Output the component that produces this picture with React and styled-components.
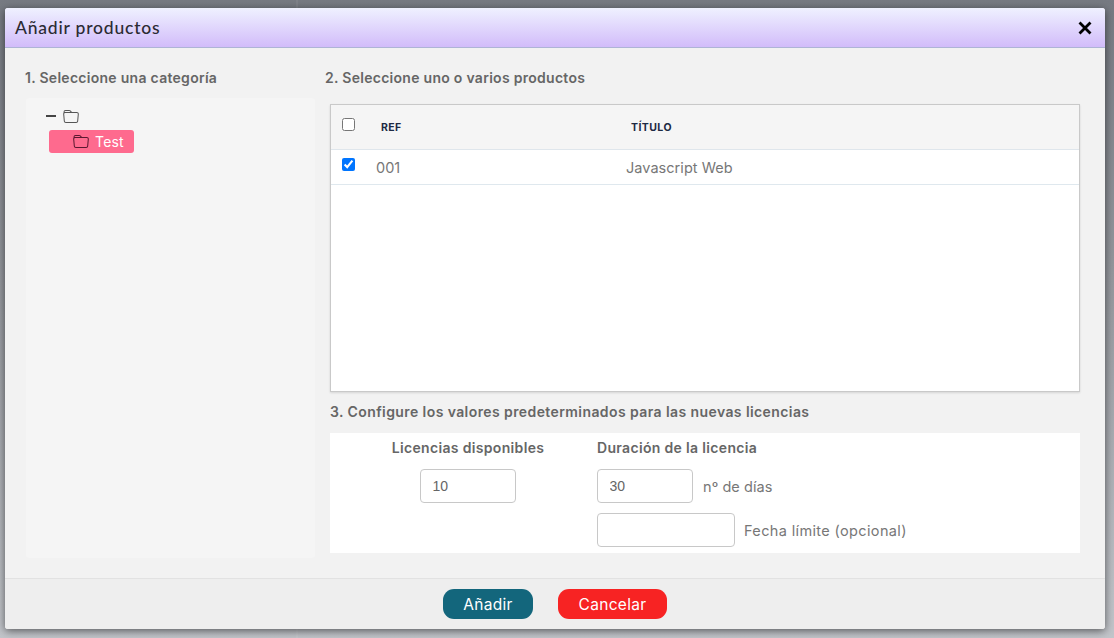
import React from "react";
import styled, { createGlobalStyle } from "styled-components";
import { BsFolder } from "react-icons/bs";

const Global = createGlobalStyle`
  html, body { margin: 0; padding: 0; height: 100%; }
  body { font-family: "Inter", "Liberation Sans", sans-serif; overflow: hidden; }
  #root { height: 100%; }
`;
const Backdrop = styled.div`
  box-sizing: border-box; width: 1114px; height: 638px; padding: 8px 9px 9px 5px;
  background:
    linear-gradient(90deg, transparent 296px, rgba(255,255,255,.06) 296px, rgba(255,255,255,.06) 298px, transparent 298px),
    linear-gradient(180deg, #767a82 0%, #92959b 40%, #c2c5ca 100%);
`;
const Dialog = styled.div`
  width: 1100px; height: 621px; display: flex; flex-direction: column;
  background: #f2f2f2; border-radius: 3px; overflow: hidden;
  box-shadow: 0 2px 9px rgba(0,0,0,.55);
`;
const Header = styled.header`
  box-sizing: border-box; height: 40px; flex: none; display: flex; align-items: center;
  justify-content: space-between; padding: 0 13px 0 10px;
  background: linear-gradient(180deg, #eff1ff 0%, #d2bcfa 100%);
  border-bottom: 1px solid #aeb4d6;
`;
const Title = styled.h1`
  margin: 0; font-weight: 500; color: #2b2b33; letter-spacing: .8px;
  font-family: "Lato", sans-serif; font-size: 17.5px;
`;
const Close = styled.button`
  border: 0; padding: 0; background: none; display: flex; color: #000; cursor: pointer;
`;
const Body = styled.div`
  flex: 1; display: grid; grid-template-columns: 300px 760px; column-gap: 0; padding: 0 20px;
`;
const Heading = styled.h2`
  margin: 0; font-size: 14px; font-weight: 600; color: #666; letter-spacing: ${p => p.$ls || ".28px"}; line-height: 20px;
`;
const Left = styled.section`
  display: flex; flex-direction: column; padding-top: 20px;
`;
const TreePanel = styled.div`
  margin: 10px 0 0 1px; width: 289px; height: 460px; box-sizing: border-box;
  background: #f5f5f5; border-radius: 3px; padding: 8px 0 0 20px; color: #555;
`;
const TreeRow = styled.div`
  display: flex; align-items: center; height: 22px;
`;
const Dash = styled.span`
  display: block; width: 10px; height: 2px; background: #444; margin-right: 7px; margin-top: -3px;
`;
const Selected = styled.div`
  display: flex; align-items: center; width: 85px; height: 23px; box-sizing: border-box; margin: 2px 0 0 3px;
  padding-left: 24px; gap: 6px; background: #fe6a8e; border-radius: 3px; color: #fff;
  font-size: 14px; font-weight: 400; letter-spacing: .2px; svg { color: #5b1830; }
`;
const Right = styled.section`
  display: flex; flex-direction: column; padding-top: 20px;
`;
const TableBox = styled.div`
  box-sizing: border-box; width: 750px; height: 288px; margin: 16px 0 0 5px; background: #fff;
  border: 1px solid #c9c9c9; box-shadow: 0 1px 2px rgba(0,0,0,.12);
`;
const HeadRow = styled.div`
  display: grid; grid-template-columns: 50px 250px 1fr; align-items: center; height: 45px; box-sizing: border-box;
  background: #f5f5f5; border-bottom: 1px solid #dfe6ec;
`;
const Row = styled.div`
  display: grid; grid-template-columns: 45px 250px 1fr; align-items: center; height: 35px; box-sizing: border-box;
  border-bottom: 1px solid #dfe8ee;
`;
const Check = styled.input`
  margin: -5px 0 0 11px; width: 13px; height: 13px; display: block;
`;
const Th = styled.span`
  font-size: 10.5px; font-weight: 700; color: #1d2a44; letter-spacing: .42px;
`;
const Td = styled.span`
  font-size: 14.5px; color: #777; letter-spacing: .04px;
`;
const ThirdHeading = styled(Heading)`
  margin: 10px 0 11px 5px;
`;
const Config = styled.div`
  display: grid; grid-template-columns: 246px 1fr; column-gap: 6px; box-sizing: border-box;
  width: 750px; height: 120px; margin-left: 5px; padding: 5px 0 0 15px; background: #fff;
`;
const Col = styled.div`
  display: flex; flex-direction: column; align-items: ${p => (p.$center ? "center" : "flex-start")};
`;
const FieldLabel = styled.div`
  font-size: 14px; font-weight: 600; color: #666; line-height: 20px; letter-spacing: .33px; margin-bottom: 11px;
`;
const FieldRow = styled.div`
  display: flex; align-items: center; margin-bottom: 10px;
`;
const Input = styled.input`
  box-sizing: border-box; width: ${p => p.$w}px; height: 34px; padding: 0 11.5px; border: 1px solid #c8c8c8;
  border-radius: 4px; background: #fff; font: 14px "Liberation Sans", sans-serif; color: #666; outline: 0;
`;
const Hint = styled.span`
  margin-left: ${p => p.$ml}px; font-size: 14.5px; color: #777; letter-spacing: ${p => p.$ls}px;
`;
const Footer = styled.footer`
  box-sizing: border-box; height: 51px; flex: none; display: flex; justify-content: center; align-items: center;
  gap: 25px; background: #eee; border-top: 1px solid #e2e2e2;
`;
const Button = styled.button`
  height: 30px; width: ${p => p.$w}px; border: 0; border-radius: 11px; background: ${p => p.$bg}; color: #fff;
  font: 400 15.5px "Inter", sans-serif; letter-spacing: .3px; padding: 0;
`;

export default function App() {
  return (
    <Backdrop>
      <Global />
      <Dialog>
        <Header>
          <Title>Añadir productos</Title>
          <Close aria-label="Cerrar">
            <svg width="14" height="14" viewBox="0 0 14 14">
              <path d="M2.5 2.5 11.5 11.5M11.5 2.5 2.5 11.5" stroke="currentColor" strokeWidth="2.8" strokeLinecap="square" />
            </svg>
          </Close>
        </Header>
        <Body>
          <Left>
            <Heading>1. Seleccione una categoría</Heading>
            <TreePanel>
              <TreeRow><Dash /><BsFolder size={16} /></TreeRow>
              <Selected><BsFolder size={16} />Test</Selected>
            </TreePanel>
          </Left>
          <Right>
            <Heading>2. Seleccione uno o varios productos</Heading>
            <TableBox>
              <HeadRow>
                <Check type="checkbox" readOnly />
                <Th>REF</Th>
                <Th>TÍTULO</Th>
              </HeadRow>
              <Row>
                <Check type="checkbox" defaultChecked />
                <Td>001</Td>
                <Td>Javascript Web</Td>
              </Row>
            </TableBox>
            <ThirdHeading $ls=".41px">3. Configure los valores predeterminados para las nuevas licencias</ThirdHeading>
            <Config>
              <Col $center>
                <FieldLabel>Licencias disponibles</FieldLabel>
                <Input $w={96} defaultValue="10" />
              </Col>
              <Col>
                <FieldLabel>Duración de la licencia</FieldLabel>
                <FieldRow><Input $w={96} defaultValue="30" /><Hint $ml={10} $ls={0.07}>nº de días</Hint></FieldRow>
                <FieldRow><Input $w={138} /><Hint $ml={9} $ls={0.36}>Fecha límite (opcional)</Hint></FieldRow>
              </Col>
            </Config>
          </Right>
        </Body>
        <Footer>
          <Button $w={90} $bg="#13667c">Añadir</Button>
          <Button $w={109} $bg="#f72323">Cancelar</Button>
        </Footer>
      </Dialog>
    </Backdrop>
  );
}
